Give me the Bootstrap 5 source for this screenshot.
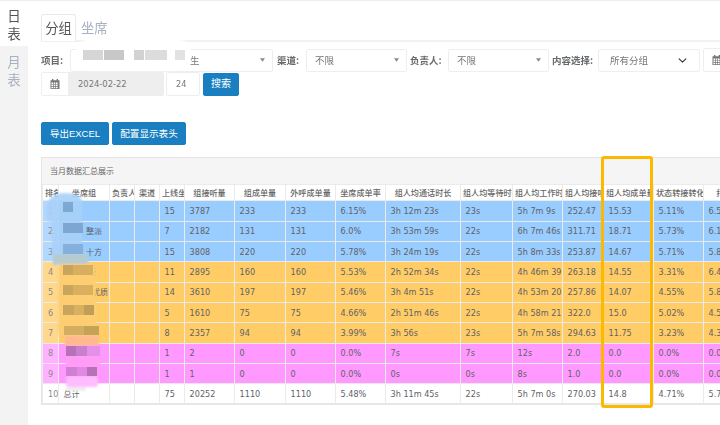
<!DOCTYPE html>
<html lang="zh">
<head>
<meta charset="utf-8">
<title>日表</title>
<link href="https://cdn.jsdelivr.net/npm/bootstrap@5.3.0/dist/css/bootstrap.min.css" rel="stylesheet">
<style>
html,body{width:720px;height:425px;overflow:hidden;background:#fff}
body{font-family:"DejaVu Sans","Noto Sans CJK SC",sans-serif;color:#676a6c;font-size:9.5px;position:relative}
.shell{filter:blur(.3px);width:720px;height:425px;overflow:hidden;border-top:1px solid #eee}
.rail{width:28px;flex:none;background:#f3f3f4;font-family:"Noto Sans CJK SC",sans-serif}
.rail-link{display:block;width:28px;font-size:13.5px;line-height:18px;text-align:center;color:#a7b1c2;text-decoration:none;padding:5px 0 4px}
.rail-link.on{background:#fff;color:#555;height:45px}
.rail-link+.rail-link{padding-top:6px}
.work{padding-left:13px;width:692px;flex:none}
.tabs-row{margin-top:13px;height:28px;border-bottom:2px solid #f1f1f1;font-family:"Noto Sans CJK SC",sans-serif;flex-wrap:nowrap}
.tabs-row .nav-link{font-size:13.3px;line-height:26px;padding:0 4px;color:#a7b1c2;border:1px solid transparent;border-bottom:0;border-radius:3px 3px 0 0;height:27px;white-space:nowrap}
.tabs-row .nav-link.active{color:#555;background:#fff;border-color:#eaeaea;width:35px;text-align:center;padding:0}
.filters{margin-top:6px;height:24px;white-space:nowrap}
.filters>*{flex:none}
.lbl{font-family:"Noto Sans CJK SC",sans-serif;font-weight:700;font-size:9.5px;color:#676a6c}
.lbl-2{width:29px}.lbl-3{width:38px}.lbl-4{width:46px}
.pick{height:23px;min-height:23px;border:1px solid #eceef0;border-radius:2px;font-family:"Noto Sans CJK SC",sans-serif;font-size:9.5px;color:#777;padding:0 14px 0 8px;box-shadow:none;background-size:9px}
.pick.tri{background-image:url("data:image/svg+xml,%3Csvg xmlns='http://www.w3.org/2000/svg' viewBox='0 0 6 4'%3E%3Cpath d='M0 0h6L3 4z' fill='%23888'/%3E%3C/svg%3E");background-size:5px 4px;background-position:right 7px center;background-repeat:no-repeat}
.w-a{width:203px;padding-left:119px}.w-b{width:101px}.w-c{width:102px;padding-left:11px}
.gap-3px{margin-left:3px}.gap-4px{margin-left:4px}
.cal-group{width:123px;flex-wrap:nowrap;height:24px}
.cal-tail{width:60px}
.cal-cap{width:28px;padding:0;justify-content:center;background:#fff;border:1px solid #eceef0;border-radius:2px 0 0 2px}
.cal-svg{width:10px;height:10px;fill:#777}
.cal-date{font-size:8.4px;color:#777;padding:0 9px;height:24px;min-height:24px;border:1px solid #eee;background:#eee;border-radius:0 2px 2px 0;box-shadow:none}
.cal-date:disabled{background:#eee}
.num-box{width:34px;height:24px;font-size:8.2px;padding:0 9px;border:1px solid #eceef0;border-radius:2px;margin-left:2px;color:#777}
.go{background:#1a7fc1;border:1px solid #1a7fc1;color:#fff;font-family:"Liberation Sans","Noto Sans CJK SC",sans-serif;font-size:10px;line-height:1;padding:0;border-radius:2px;height:23px;white-space:nowrap}
.go:hover{background:#1a7fc1;color:#fff}
.go-s{width:36px;margin-left:3px}
.actions{margin-top:26px;height:23px}
.go-x{width:68px;font-size:9.5px}
.go-c{width:74px;margin-left:3px;font-size:9.6px}
.sheet{margin-top:12px;width:712px;border:1px solid #e4e4e4;border-bottom:0;border-right:0;border-radius:0;background:#fff}
.sheet-head{height:26px;background:#f5f5f5;font-family:"Noto Sans CJK SC",sans-serif;font-size:8px;line-height:26px;padding:0 0 0 8px;color:#666;border:0;border-radius:0!important}
.grid{table-layout:fixed;width:711px;margin:0;font-size:8.1px;color:#5f6265;border-color:#e7e7e7;border-bottom:2px solid #e7e7e7}
.grid th,.grid td{padding:0 4.6px;overflow:hidden;white-space:nowrap;text-overflow:clip;border:1px solid rgba(231,231,231,.85);vertical-align:middle;line-height:10px}
.grid th{height:16.4px;padding:0 2px;text-align:center;font-weight:500;background:#fff;color:#666;font-family:"Noto Sans CJK SC",sans-serif}
.grid td{height:20.33px;background:var(--fill);box-shadow:none}
.grid td.cjk{font-family:"Noto Sans CJK SC",sans-serif;font-size:8px}
.grid .rk{padding-left:5px;padding-right:0;opacity:.75}
.tone-b{--fill:#99ccff}
.tone-o{--fill:#ffcc66}
.tone-p{--fill:#ff99ff}
.tone-w{--fill:#fff}
.pa{padding-left:27px!important}.pb{padding-left:27px!important}.pc{padding-left:29px!important}.pd{padding-left:33px!important}
.mask{position:absolute;left:0;top:0;width:720px;height:425px;pointer-events:none}
.mark-box{position:absolute;left:601px;top:156px;width:52px;height:252px;border:3px solid #fdb900;border-radius:3px;pointer-events:none;filter:blur(.3px)}
</style>
</head>
<body>
<div class="shell d-flex">
  <nav class="rail nav flex-column flex-nowrap">
    <a class="rail-link on" href="#">日<br>表</a>
    <a class="rail-link" href="#">月<br>表</a>
  </nav>
  <main class="work">
    <ul class="nav tabs-row">
      <li class="nav-item"><a class="nav-link active" href="#">分组</a></li>
      <li class="nav-item"><a class="nav-link" href="#">坐席</a></li>
    </ul>
    <div class="filters d-flex align-items-center">
      <span class="lbl lbl-2">项目:</span>
      <select class="form-select pick tri w-a"><option>生</option></select>
      <span class="lbl lbl-2 gap-4px">渠道:</span>
      <select class="form-select pick tri w-b"><option>不限</option></select>
      <span class="lbl lbl-3 gap-3px">负责人:</span>
      <select class="form-select pick tri w-b"><option>不限</option></select>
      <span class="lbl lbl-4 gap-3px">内容选择:</span>
      <select class="form-select pick w-c"><option>所有分组</option></select>
      <div class="input-group cal-group cal-tail gap-3px">
        <span class="input-group-text cal-cap"><svg class="cal-svg" viewBox="0 0 10 10"><path d="M2 0h1.4v1.2h3.2V0H8v1.2h1.5V10H.5V1.2H2zM1.4 3.4v1.5h1.6V3.4zm2.3 0v1.5h1.6V3.4zm2.3 0v1.5h1.6V3.4zM1.4 5.6v1.5h1.6V5.6zm2.3 0v1.5h1.6V5.6zm2.3 0v1.5h1.6V5.6zM1.4 7.8v1.4h1.6V7.8zm2.3 0v1.4h1.6V7.8zm2.3 0v1.4h1.6V7.8z"/></svg></span>
      </div>
    </div>
    <div class="d-flex align-items-center">
      <div class="input-group cal-group">
        <span class="input-group-text cal-cap"><svg class="cal-svg" viewBox="0 0 10 10"><path d="M2 0h1.4v1.2h3.2V0H8v1.2h1.5V10H.5V1.2H2zM1.4 3.4v1.5h1.6V3.4zm2.3 0v1.5h1.6V3.4zm2.3 0v1.5h1.6V3.4zM1.4 5.6v1.5h1.6V5.6zm2.3 0v1.5h1.6V5.6zm2.3 0v1.5h1.6V5.6zM1.4 7.8v1.4h1.6V7.8zm2.3 0v1.4h1.6V7.8zm2.3 0v1.4h1.6V7.8z"/></svg></span>
        <input class="form-control cal-date" value="2024-02-22" disabled>
      </div>
      <input class="form-control num-box" value="24">
      <button class="btn go go-s" type="button">搜索</button>
    </div>
    <div class="actions d-flex">
      <button class="btn go go-x" type="button">导出EXCEL</button>
      <button class="btn go go-c" type="button">配置显示表头</button>
    </div>
    <section class="card sheet">
      <div class="card-header sheet-head">当月数据汇总展示</div>
      <table class="table grid">
        <colgroup><col style="width:16px"><col style="width:51px"><col style="width:25px"><col style="width:25px"><col style="width:25px"><col style="width:50px"><col style="width:51px"><col style="width:50px"><col style="width:50px"><col style="width:75px"><col style="width:52px"><col style="width:50px"><col style="width:41px"><col style="width:50px"><col style="width:50px"><col style="width:50px"></colgroup>
        <thead><tr><th>排名</th><th>坐席组</th><th>负责人</th><th>渠道</th><th>上线坐席</th><th>组接听量</th><th>组成单量</th><th>外呼成单量</th><th>坐席成单率</th><th>组人均通话时长</th><th>组人均等待时长</th><th>组人均工作时长</th><th>组人均接听量</th><th>组人均成单量</th><th>状态转接转化率</th><th>打断率</th></tr></thead>
        <tbody>
          <tr class="tone-b"><td class="rk">1</td><td class="cjk"></td><td></td><td></td><td>15</td><td>3787</td><td>233</td><td>233</td><td>6.15%</td><td>3h 12m 23s</td><td>23s</td><td>5h 7m 9s</td><td>252.47</td><td>15.53</td><td>5.11%</td><td>6.5</td></tr>
          <tr class="tone-b"><td class="rk">2</td><td class="cjk pa">整派</td><td></td><td></td><td>7</td><td>2182</td><td>131</td><td>131</td><td>6.0%</td><td>3h 53m 59s</td><td>22s</td><td>6h 7m 46s</td><td>311.71</td><td>18.71</td><td>5.73%</td><td>6.1</td></tr>
          <tr class="tone-b"><td class="rk">3</td><td class="cjk pb">十方</td><td></td><td></td><td>15</td><td>3808</td><td>220</td><td>220</td><td>5.78%</td><td>3h 24m 19s</td><td>22s</td><td>5h 8m 33s</td><td>253.87</td><td>14.67</td><td>5.71%</td><td>5.8</td></tr>
          <tr class="tone-o"><td class="rk">4</td><td class="cjk pc">康</td><td></td><td></td><td>11</td><td>2895</td><td>160</td><td>160</td><td>5.53%</td><td>2h 52m 34s</td><td>22s</td><td>4h 46m 39s</td><td>263.18</td><td>14.55</td><td>3.31%</td><td>6.4</td></tr>
          <tr class="tone-o"><td class="rk">5</td><td class="cjk pd">优质</td><td></td><td></td><td>14</td><td>3610</td><td>197</td><td>197</td><td>5.46%</td><td>3h 4m 51s</td><td>22s</td><td>4h 53m 20s</td><td>257.86</td><td>14.07</td><td>4.55%</td><td>5.8</td></tr>
          <tr class="tone-o"><td class="rk">6</td><td class="cjk"></td><td></td><td></td><td>5</td><td>1610</td><td>75</td><td>75</td><td>4.66%</td><td>2h 51m 46s</td><td>22s</td><td>4h 58m 21s</td><td>322.0</td><td>15.0</td><td>5.02%</td><td>4.5</td></tr>
          <tr class="tone-o"><td class="rk">7</td><td class="cjk"></td><td></td><td></td><td>8</td><td>2357</td><td>94</td><td>94</td><td>3.99%</td><td>3h 56s</td><td>23s</td><td>5h 7m 58s</td><td>294.63</td><td>11.75</td><td>3.23%</td><td>4.3</td></tr>
          <tr class="tone-p"><td class="rk">8</td><td class="cjk"></td><td></td><td></td><td>1</td><td>2</td><td>0</td><td>0</td><td>0.0%</td><td>7s</td><td>7s</td><td>12s</td><td>2.0</td><td>0.0</td><td>0.0%</td><td>0.0</td></tr>
          <tr class="tone-p"><td class="rk">9</td><td class="cjk"></td><td></td><td></td><td>1</td><td>1</td><td>0</td><td>0</td><td>0.0%</td><td>0s</td><td>0s</td><td>8s</td><td>1.0</td><td>0.0</td><td>0.0%</td><td>0.0</td></tr>
          <tr class="tone-w"><td class="rk">10</td><td class="cjk">总计</td><td></td><td></td><td>75</td><td>20252</td><td>1110</td><td>1110</td><td>5.48%</td><td>3h 11m 45s</td><td>22s</td><td>5h 7m 0s</td><td>270.03</td><td>14.8</td><td>4.71%</td><td>5.7</td></tr>
        </tbody>
      </table>
    </section>
  </main>
</div>
<svg class="mask" viewBox="0 0 720 425" aria-hidden="true">
  <defs><filter id="soft"><feGaussianBlur stdDeviation="1.2"/></filter><filter id="softer"><feGaussianBlur stdDeviation=".7"/></filter></defs>
  <g filter="url(#soft)">
    <rect x="76" y="39" width="115" height="31" rx="14" fill="#fff"/>
    <path d="M46 212q0-19 19-19t17 12v50h6v10h-35v-10h-1v-33h-4z" fill="#a8d0f8" opacity=".9"/>
    <rect x="53" y="254" width="35" height="10" fill="#b6cbd0"/>
    <rect x="58" y="264" width="38" height="72" rx="4" fill="#fdcd72"/>
    <rect x="65" y="336" width="34" height="10" fill="#ffb88f"/>
    <rect x="66" y="346" width="34" height="30" rx="3" fill="#ff9cf5"/>
    <rect x="66" y="376" width="32" height="11" rx="3" fill="#ffbcff"/>
    <rect x="66" y="387" width="20" height="4" fill="#eeeeee"/>
  </g>
  <g filter="url(#softer)">
    <rect x="83" y="50" width="20" height="10" fill="#d6d6d6"/><rect x="104" y="50" width="20" height="10" fill="#c8c8c8"/>
    <rect x="134" y="50" width="10" height="10" fill="#d2d2d2"/><rect x="145" y="50" width="22" height="10" fill="#dcdcdc"/><rect x="175" y="50" width="10" height="10" fill="#e2e2e2"/>
    <rect x="63" y="202" width="10" height="10" fill="#7ba8d4"/>
    <rect x="63" y="223" width="20" height="10" fill="#7ea6d2"/>
    <rect x="63" y="244" width="20" height="10" fill="#86b0dc"/>
    <rect x="63" y="265" width="10" height="10" fill="#c8a45c"/><rect x="73" y="265" width="20" height="10" fill="#d8ae5e"/>
    <rect x="63" y="285" width="10" height="10" fill="#c8a45c"/><rect x="73" y="285" width="20" height="10" fill="#d8b060"/>
    <rect x="63" y="305" width="11" height="10" fill="#c8a45c"/><rect x="74" y="305" width="10" height="10" fill="#d8b060"/><rect x="84" y="305" width="10" height="10" fill="#c09e58"/>
    <rect x="64" y="326" width="20" height="9" fill="#d4ae60"/><rect x="84" y="326" width="15" height="9" fill="#c4a258"/>
    <rect x="66" y="346" width="10" height="10" fill="#b870b8"/><rect x="76" y="346" width="11" height="10" fill="#c880cc"/><rect x="87" y="346" width="13" height="10" fill="#e490e8"/>
    <rect x="66" y="367" width="11" height="9" fill="#d080d0"/><rect x="77" y="367" width="10" height="9" fill="#e088e4"/><rect x="87" y="367" width="10" height="9" fill="#b870b8"/>
  </g>
</svg>
<div class="mark-box"></div>
</body>
</html>
